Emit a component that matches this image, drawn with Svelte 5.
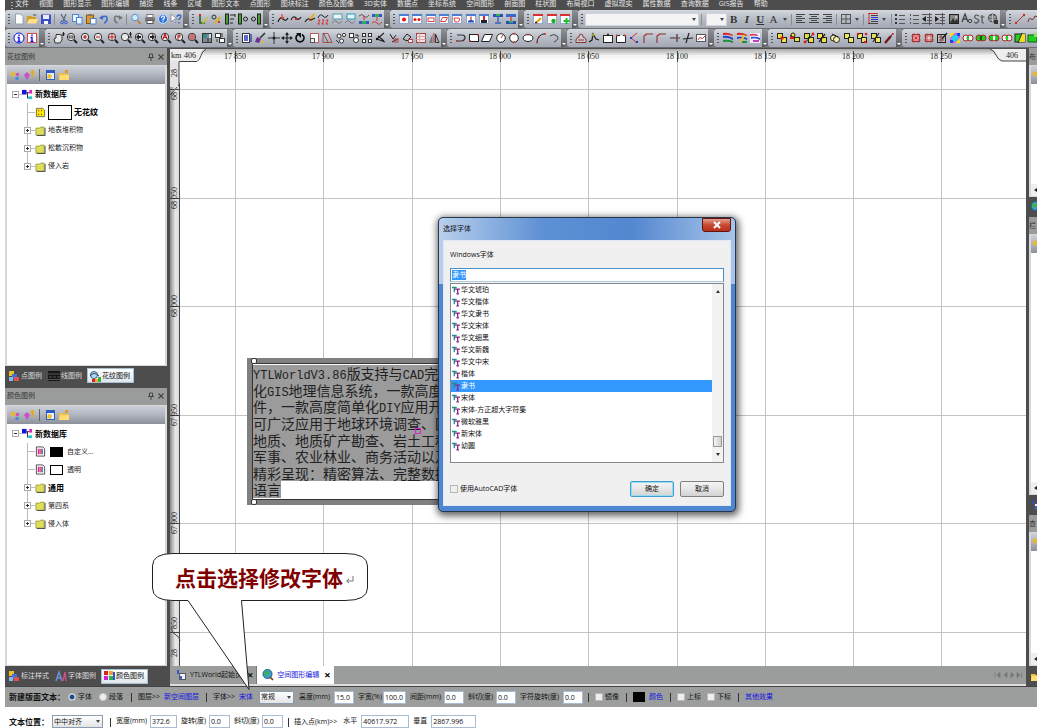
<script lang="ts">
  type Tool = string;
  interface Group {
    width: number;
    tools: Tool[];
  }
  interface Node {
    label: string;
    icon: string;
    swatch?: string;
    bold?: boolean;
  }

  const menus = [
    '文件', '视图', '图形显示', '图形编辑', '捕捉', '线条', '区域', '图形文本', '点图形',
    '图块标注', '颜色及图像', '3D实体', '数据点', '坐标系统', '空间图形', '剖面图', '柱状图',
    '布局视口', '虚拟现实', '属性数据', '查询数据', 'GIS报告', '帮助'
  ];

  // icon builders, all on a 12x12 grid
  const line = (d: string, color = '#222', w = 1) =>
    `<path d="${d}" fill="none" stroke="${color}" stroke-width="${w}"/>`;
  const fill = (d: string, color: string) => `<path d="${d}" fill="${color}"/>`;
  const box = (x: number, y: number, w: number, h: number, color: string, stroke = 'none') =>
    `<rect x="${x}" y="${y}" width="${w}" height="${h}" fill="${color}" stroke="${stroke}"/>`;
  const dot = (x: number, y: number, r: number, color: string, stroke = 'none') =>
    `<circle cx="${x}" cy="${y}" r="${r}" fill="${color}" stroke="${stroke}"/>`;
  const mag = (inner: string) =>
    dot(5, 5, 3.7, '#e8e8ea', '#333') + line('M8 8l3 3', '#222', 2) + inner;
  const win = (inner: string, bar = '#4a7fd0') =>
    box(1.5, 1.5, 9, 9, '#fff', '#8fa8cc') + box(1, 1, 10, 2, bar) + inner;
  const pair = (a: string, b: string) =>
    box(1.5, 1.5, 5, 5, a, '#222') + box(5.5, 5.5, 5, 5, b, '#222');
  const rings = (a: string, mid: string, b: string) =>
    dot(4, 6, 3, a, '#b02020') + dot(8, 6, 3, b, '#b02020') +
    `<ellipse cx="6" cy="6" rx="1.2" ry="2.4" fill="${mid}"/>`;

  const icons: Record<string, string> = {
    new: fill('M2.5 1h5l2.5 2.5V11h-7.5z', '#fff') + line('M2.5 1h5l2.5 2.5V11h-7.5z', '#8aa'),
    open: fill('M1 3h4l1 1h4v6H1z', '#d99a20') + fill('M3 6h9l-2 4.5H1z', '#ffe08a') + line('M7 2q3-1 3 1', '#555'),
    save: box(1, 1.5, 10, 9.5, '#3c4fc0') + box(3, 2, 6, 4, '#e8eefc') + box(4, 8, 4, 3, '#fff'),
    cut: line('M3 1l4 7M8 1L5 8', '#567', 1.2) + dot(4, 9.5, 1.4, 'none', '#35c') + dot(8, 9.5, 1.4, 'none', '#35c'),
    copy: box(1.5, 1.5, 6, 7, '#eaf3ff', '#4b84cc') + box(5.5, 4.5, 5.5, 6.5, '#eaf3ff', '#4b84cc'),
    paste: box(1.5, 2, 7, 8.5, '#d89a30', '#8a5a10') + box(3.5, 1, 3, 2, '#777') + box(5.5, 5.5, 5.5, 5.5, '#fff', '#4b84cc'),
    undo: line('M3 5q6-4 6 1q0 3-3 4', '#3a6fc8', 1.6) + fill('M1 5l4-3v5z', '#3a6fc8'),
    redo: line('M8.5 5q-6-4-6 1q0 3 3 4', '#777', 1.6) + fill('M11 5L7 2v5z', '#777'),
    find: dot(5, 4.5, 3.3, '#cfeaff', '#5a8fc0') + line('M7.5 7.5l3 3.5', '#c08030', 1.8),
    print: box(3, 1.5, 6, 3, '#fff', '#777') + box(1, 4.5, 10, 4, '#777') + box(3, 7.5, 6, 3, '#fff', '#555'),
    help: dot(6, 6, 4.5, '#2f74d8', '#bcd8ff') + line('M4.5 5q0-2 1.5-2t1.5 1.5q0 1-1.5 2v1M6 8.3v1', '#fff', 1.2),
    whats: fill('M1 1v8l2-2 2 3 1-1-2-3h3z', '#fff') + line('M1 1v8l2-2 2 3 1-1-2-3h3z', '#779', 0.7) + line('M7 4q0-2 2-2t2 1.5q0 1-2 2.5v1M9 9v1.5', '#2f64c8', 1.3),
    nodeA: line('M3 1v9h5', '#262', 1.6) + fill('M5 10l5-6 1 1-5 6z', '#d8c020') + box(2, 1, 2, 2, '#e02020'),
    nodeB: dot(4, 4, 2, 'none', '#333') + line('M5 10l5-6', '#d8b020', 2) + box(8, 8, 2, 2, '#cc3030'),
    nodeC: box(1.5, 1, 3, 10, '#4ca030', '#222') + line('M6 2h5M6 6h4M6 10h3M11 1v3', '#222'),
    nodeD: box(1.5, 1, 3, 10, '#4ca030', '#222') + dot(8.5, 6, 2, 'none', '#222'),
    nodeE: box(7.5, 1, 3, 10, '#4ca030', '#222') + dot(3.5, 6, 2, 'none', '#222'),
    curveA: line('M1 9q2-6 5-3t5-1', '#222', 1.2) + line('M5 1v4M3 4l2 2 2-2', '#d22'),
    curveB: line('M1 7q2-5 5-2t5-1', '#222', 1.2) + dot(6, 6, 1.2, '#d22'),
    curveC: line('M1 9q3-5 6-2l4-2', '#222', 1.2) + line('M6 6l4-5', '#e8b010', 2) + dot(6, 7, 1, '#d22'),
    curveD: line('M1 5q2-5 5-2t5-1', '#222') + line('M1 7h2l-2 4h2M5 7h2l-2 4h2M9 7h2l-2 4h2', '#d22', 0.9),
    curveE: box(2, 1, 9, 5, '#e8f4f8', '#5a98a8') + line('M1 10q3-4 5-1t5-1', '#777'),
    curveF: box(3, 1, 8, 5, '#e8f4f8', '#20a0b8') + line('M1 10q3-4 5-1t5-1', '#777'),
    curveG: line('M1 3q3-3 5 0t5-1', '#555') + line('M6 3v4', '#d22') + box(1, 8, 10, 3, '#3858c8') + box(4, 8, 4, 3, '#30b050'),
    curveH: box(1, 1, 10, 3, '#3858c8') + box(4, 1, 4, 3, '#30b050') + line('M6 4v4M1 10q3-3 5 0t5-1', '#c33'),
    winDot: win(dot(6, 6.5, 2, '#e81818')),
    winDots: win(dot(4, 6.5, 1.5, '#e81818') + dot(8, 6.5, 1.5, '#e81818')),
    winRect: win(box(3, 5, 6, 3.5, 'none', '#e84040')),
    winPara: win(line('M4.5 4.5h5l-2 4h-5z', '#e04040')),
    winArc: win(line('M3 5h5q2 2-1 4H4z', '#e04040')),
    winDown: win(line('M6 3.5v5', '#e03030', 1.3) + fill('M3 8q3-2 6 0v1.5H3z', '#2850b8')),
    winTray: win(box(3, 7, 6, 3, '#222') + line('M6 3v4', '#e02020', 2)),
    winPush: box(1, 1, 10, 3, '#2850b8') + line('M6 3v6M3 10h6', '#3a60b8', 1.4) + box(4, 1, 4, 2, '#30b050'),
    winPull: box(1, 1, 10, 3, '#3a68c8') + line('M6 3v6', '#c44', 1.4) + box(1, 8, 10, 3, '#2850b8') + box(4, 8, 4, 2, '#30b050'),
    redEdit: win(line('M4 10l5-5', '#e8a010', 2) + dot(4, 9.5, 1, '#222'), '#d83030'),
    redDot: win(dot(7.5, 8, 2.2, '#20b020'), '#d83030'),
    redAdd: win(line('M7.5 5v6M4.5 8h6', '#20c020', 2), '#d83030'),
    alignL: line('M1 1.5h9M1 3.5h6M1 5.5h9M1 7.5h6M1 9.5h9', '#444'),
    alignC: line('M1 1.5h10M3 3.5h6M1 5.5h10M3 7.5h6M1 9.5h10', '#444'),
    alignR: line('M2 1.5h9M5 3.5h6M2 5.5h9M5 7.5h6M2 9.5h9', '#444'),
    grid: box(1.5, 1.5, 9, 9, 'none', '#555') + line('M6 1v10M1 6h10', '#555'),
    spacing: line('M4 2.5h7M4 8.5h7M1 10.5h10', '#444') + line('M1 .5h10M2 1v9', '#c33') + line('M4 4.5h7M4 6.5h7', '#2238c8'),
    bullets: line('M5 2.5h6M5 6.5h6M5 10.5h6', '#555') + box(1, 1, 2, 2, '#333') + box(1, 5, 2, 2, '#333') + box(1, 9, 2, 2, '#333'),
    numbers: line('M5 2.5h6M5 6.5h6M5 10.5h6M2.5 1v2M2.5 5v2M2.5 9v2', '#555'),
    outdent: line('M1 1.5h10M6 4.5h5M6 7.5h5M1 10.5h10M8.5 0v12', '#555') + fill('M1 6l4-3v6z', '#222'),
    indent: line('M1 1.5h10M6 4.5h5M6 7.5h5M1 10.5h10M8.5 0v12', '#555') + fill('M5 6L1 3v6z', '#222'),
    photo: box(1.5, 1.5, 9, 9, '#888', '#222') + fill('M2 10l3-5 2 3 2-2 2 4z', '#333') + dot(8, 4, 1, '#ddd'),
    aSub: line('M1 9l3-8 3 8M2 6h4', '#444', 1.3) + dot(9, 8, 1.7, 'none', '#444'),
    stText: line('M5 3q-3-2-4 0t2 3q3 1 1 3t-4 0M8 2v7q0 1 2 1M6.5 4h4', '#555', 1.2),
    globe: dot(5.5, 5, 4, '#777', '#444') + line('M2 4h7M2 7h7M5.5 1v8', '#bbb') + box(7, 7, 4, 4, '#333'),
    segment: line('M2 10l8-8', '#a33') + dot(2, 10, 1.2, '#d22') + dot(10, 2, 1.2, '#d22'),
    polyline: line('M1 9q1-5 3-3t4-3l3 1', '#733'),
    infoO: dot(6, 6, 5, '#fff', '#1414e0') + line('M6 2.5v1.5M4.5 5.5H6v4M4.5 9.5h3', '#1414e0', 1.4),
    infoB: box(1.5, 1.5, 9, 9, '#fff', '#e04848') + line('M6 2.5v1.5M4.5 5.5H6v4M4.5 9.5h3', '#1414e0', 1.4),
    pan: fill('M2 11L1 7l2-1V3l1-1 1 1 1-1 1 1 2 0v5l-2 3z', '#e8e8e8') + line('M2 11L1 7l2-1V3l1-1 1 1 1-1 1 1 2 0v5l-2 3z', '#333') + line('M9 2h3M10.5 0v4', '#222'),
    zoomRect: mag(line('M3 4h4v2H3z', '#444')),
    zoomIn: mag(line('M5 3v4M3 5h4', '#c01818', 1.2)),
    zoomOut: mag(line('M3 5h4', '#c01818', 1.2)),
    zoomAll: mag(line('M5 1v8M1 5h8', '#c01818')),
    zoomPm: mag(line('M9 2h3M9 5h3M10.5 0v4', '#222')),
    zoomL: mag(fill('M2 5l3-3v2h2v2H5v2z', '#222')),
    zoomR: mag(fill('M8 5L5 2v2H3v2h2v2z', '#222')),
    zoomA: mag(line('M3 7l2-5 2 5M4 5.5h2', '#c01818', 1.2)),
    zoomP: mag(line('M4 8V3h2v2H4', '#c01818')),
    zoomX: mag(line('M3 3h4v4H3zM5 1v8M1 5h8', '#b03030', 0.8)),
    views: box(1.5, 1.5, 9, 9, '#cde', '#333') + box(2, 2, 4, 4, '#3a8a8a') + line('M2 7h8M7 2v8M2 9h8', '#333'),
    cascade: box(1.5, 1.5, 5, 4, '#fff', '#333') + box(5.5, 6.5, 5, 4, '#fff', '#333') + line('M8 1v4M3 7v3', '#333'),
    select: box(1.5, 1.5, 7, 9, '#fff', '#334') + line('M3 4h4M3 6h4M3 8h4M10 2v8', '#2838b8', 1.3),
    brush: line('M11 1L6 6', '#333', 1.6) + fill('M3 5l4 2-2 4-4-1z', '#703090') + dot(9, 10, 1.3, '#d8c020'),
    cross: line('M6 0v12M0 6h12', '#333') + dot(6, 6, 1.5, '#222'),
    move: line('M6 1v10M1 6h10', '#222', 1.2) + fill('M6 0l2 3H4zM6 12l2-3H4zM0 6l3-2v4zM12 6L9 4v4z', '#222'),
    rotate: line('M4 2.5a4 4 0 1 0 4 0', '#111', 1.7) + fill('M2 1h5v5z', '#111'),
    scale: box(2.5, 1.5, 8, 9, '#fff', '#c06060') + box(2.5, 6.5, 4, 4, '#eee', '#555'),
    shear: line('M2 1.5h5l4 9H2z', '#b04848') + line('M2 1l5 9', '#555'),
    link: dot(4, 4, 2, '#fff', '#333') + dot(9, 3, 1.6, '#fff', '#333') + dot(6.5, 9, 2, '#fff', '#333') + line('M1 8l3 3', '#333'),
    copyObj: box(1.5, 1.5, 4, 4, '#fff', '#333') + dot(8, 8, 2.5, '#fff', '#333') + line('M7 3h3v2', '#333'),
    array: box(1.5, 1.5, 3, 3, '#fff', '#333') + box(7.5, 1.5, 3, 3, '#fff', '#333') + box(1.5, 7.5, 3, 3, '#fff', '#333') + box(7.5, 7.5, 3, 3, '#fff', '#333'),
    angle: line('M9 1L2 7l8 3M3 4l6 5', '#222', 1.1) + dot(2, 7, 1.2, '#111'),
    mirrorA: line('M2 2l3 5 3-4M4 10l6-3', '#222') + box(6, 7, 4, 3, 'none', '#c04040'),
    mirrorB: line('M1 7l4-5 4 3-4 4z', '#222') + box(6.5, 7.5, 4, 3, '#fff', '#c04040'),
    table: box(1.5, 1.5, 9, 9, '#f2e4e4', '#a04040') + line('M1 4.5h10M1 7.5h10M4.5 1v10', '#c99', 0.8),
    flip: line('M6 1v10', '#b33') + fill('M4.5 2v9H1z', '#777') + line('M7.5 2v8.5H11z', '#333'),
    hook: line('M2 3h5q3 0 3 2.5T7 9H1', '#333', 1.2) + dot(2, 9, 1, '#c33'),
    rect: box(1.5, 2.5, 9, 7, '#fff', '#222') + dot(2, 9, 1, '#c33') + dot(10, 3, 1, '#c33'),
    para: fill('M3.5 2.5h8l-3 7h-8z', '#fff') + line('M3.5 2.5h8l-3 7h-8z', '#222'),
    circle: dot(6, 6, 4.3, '#fff', '#222') + line('M6 6l2-3', '#c33'),
    circle3: dot(6, 6, 4.3, '#fff', '#222') + dot(6, 1.7, 1, '#c33') + dot(6, 10.3, 1, '#c33'),
    ellipse: '<ellipse cx="6" cy="6" rx="5" ry="3.5" fill="#fff" stroke="#222"/>' + dot(6, 2.5, 1, '#c33'),
    arc: line('M2 11Q2 3 10 1.5', '#222') + dot(2, 10.5, 1, '#c33') + dot(10, 2, 1, '#c33') + dot(4, 5, 1, '#c33'),
    arc2: line('M2 4q4-3 7 0t-3 6', '#444'),
    stamp: fill('M1 8q0-3 3-3 0-3 2-3t2 3q3 0 3 3v2H1z', '#ccc') + line('M1 10.5V8q0-2 3-3 0-3 2-3t2 3q3 1 3 3v2.5zM3 8h6', '#833'),
    spline: line('M1 10l3-2 1-6 3 5 3 1', '#222', 1.3) + dot(5, 3, 1.4, '#9a9a20'),
    rectIn: box(1.5, 3.5, 9, 7, '#fff', '#222') + dot(6, 2.5, 1, '#222'),
    rectGap: box(1.5, 3.5, 9, 7, '#fff') + line('M5 3.5H1.5v7h9v-7H8', '#222') + dot(2, 3.5, 1, '#c33') + dot(10, 3.5, 1, '#c33'),
    polyBlue: line('M9 1L3 6l6 5', '#c33') + box(2, 5, 2, 2, '#2238c8') + box(8, 9, 2, 2, '#2238c8'),
    fillet: line('M2 11V4l3-2h6', '#833', 1.1) + line('M2 4q1-2 3-2', '#c33'),
    trim: line('M1 6h5M8 2v8', '#333', 1.2) + line('M6 6h5', '#833'),
    extend: line('M1 7l10-1M7 1L4 11', '#222', 1.2),
    hatch: box(1.5, 2.5, 9, 7, '#fff', '#555') + line('M3 8q2-4 3-2t4-2', '#c33'),
    flagA: fill('M1 1q5-1 10 2v1Q6 2 1 3z', '#e02020') + fill('M1 4q5-1 10 2v2Q6 5 1 6z', '#2040d0') + fill('M1 8q5-1 10 1v2q-5-2-10-1z', '#209040'),
    flagB: fill('M1 1q5-1 10 2v1Q6 2 1 3z', '#e02020') + fill('M1 5q5-1 10 1v2Q6 5 1 7z', '#2040d0') + line('M5 10l3-7', '#e8c020', 2) + fill('M6 9h5v2H6z', '#209040'),
    flagC: box(1, 1, 10, 10, '#eef') + fill('M1 2q5-1 8 1v1q-4-1-8 0z', '#e04060') + fill('M2 5q5-1 9 1v2Q6 5 2 7z', '#3050d0') + fill('M4 8h6v2H4z', '#c040c0'),
    unionA: pair('#f0e040', '#f0e040') + box(4.5, 4.5, 3, 3, '#e02020'),
    unionB: box(1, 3, 5, 4, '#e02020') + box(5.5, 5.5, 5, 4, '#f0e040', '#222') + dot(4, 3, 2, '#f0e040', '#222'),
    unionC: pair('#d8e040', '#f0e040') + line('M2 11l8-9', '#222') + dot(10, 2, 1.4, '#e02020') + dot(2, 10, 1.4, '#e02020'),
    unionD: pair('#f0e040', '#f0e040') + line('M3 10l6-8', '#222', 1.3),
    unionE: dot(4.5, 6, 3, '#f8f4b0', '#222') + dot(7.5, 7.5, 3, '#f8f4b0', '#222') + line('M3 2l6 3', '#222'),
    unionF: pair('#f0e860', '#f0e860'),
    unionG: pair('#f0e860', '#f0e860') + dot(2, 2, 1.3, '#e02020') + dot(10, 2, 1.3, '#e02020') + dot(9, 10, 1.3, '#e02020'),
    unionH: pair('#e0e060', '#f0e860') + line('M9 1L3 10', '#222', 1.2),
    wand: line('M2 11l6-7', '#701818', 2.4) + line('M8 4l2-3', '#333') + dot(10, 2, 1, '#e03030'),
    meshA: box(2.5, 2.5, 7, 7, '#f8d8d8', '#a03030') + line('M1 4h10M1 8h10M4 1v10M8 1v10', '#b44', 0.8) + box(5, 5, 2, 2, '#e02020'),
    meshB: box(2.5, 2.5, 7, 7, '#e8d0d0', '#a03030') + line('M1 4h10M1 8h10M4 1v10M8 1v10', '#b44', 0.8),
    meshC: box(1.5, 2.5, 8, 8, '#bbb', '#222') + line('M3 5h5M3 8h5M5 3v7', '#844') + line('M6 7l5-6', '#222', 1.3),
    color: box(1, 1, 10, 10, '#f040f0') + fill('M1 1h5L1 6zM11 11H6l5-5z', '#f0e020') + fill('M3 4l5-2 2 4-3 4-5-2z', '#20d0f0') + box(8, 1, 3, 3, '#2040f0') + box(1, 8, 3, 3, '#2040f0'),
    ringA: rings('#fff', '#20d020', '#fff'),
    ringB: rings('#20d020', '#106010', '#20d020'),
    ringC: rings('#20d020', '#fff', '#20d020'),
    ringD: rings('#fff', '#20d020', '#eee'),
    slice: box(1, 2, 10, 8, '#20d020', '#222') + fill('M7 2h4v8H4z', '#f0e020') + line('M8 1L4 11', '#222'),
    green: box(1, 3, 9, 7, '#20d020', '#106010') + fill('M7 1h4v4H7z', '#90e070')
  };

  const toolbars: Group[][] = [
    [
      { width: 184, tools: ['new', 'open', 'save', '|', 'cut', 'copy', 'paste', 'undo', 'redo', '|', 'find', 'print', 'help', 'whats'] },
      { width: 80, tools: ['nodeA', 'nodeB', 'nodeC', 'nodeD', 'nodeE'] },
      { width: 121, tools: ['curveA', 'curveB', 'curveC', 'curveD', 'curveE', 'curveF', 'curveG', 'curveH'] },
      { width: 134, tools: ['winDot', 'winDots', 'winRect', 'winPara', 'winArc', 'winDown', 'winTray', 'winPush', 'winPull'] },
      { width: 54, tools: ['redEdit', 'redDot', 'redAdd'] },
      {
        width: 428,
        tools: [
          'combo-font', '|', 'combo-size', 'B', 'I', 'U', 'A', 'v', '|', 'alignL', 'alignC', 'alignR', '|', 'grid', 'v', '|',
          'spacing', 'v', '|', 'bullets', 'numbers', 'outdent', 'indent', 'photo', 'aSub', 'stText', 'globe'
        ]
      },
      { width: 0, tools: ['segment', 'polyline'] }
    ],
    [
      { width: 40, tools: ['infoO', 'infoB'] },
      {
        width: 188,
        tools: ['pan', 'zoomRect', 'zoomIn', 'zoomOut', 'zoomAll', 'zoomPm', 'zoomL', 'zoomR', 'zoomA', 'zoomP', 'zoomX', 'views', 'cascade']
      },
      {
        width: 214,
        tools: ['select', 'brush', 'cross', 'move', 'rotate', 'scale', 'shear', 'link', 'copyObj', 'array', 'angle', 'mirrorA', 'mirrorB', 'table', 'flip']
      },
      { width: 120, tools: ['hook', 'rect', 'para', 'circle', 'circle3', 'ellipse', 'arc', 'arc2'] },
      { width: 147, tools: ['stamp', 'spline', 'rectIn', 'rectGap', 'polyBlue', 'fillet', 'fillet', 'trim', 'extend', 'hatch'] },
      { width: 54, tools: ['flagA', 'flagB', 'flagC'] },
      { width: 134, tools: ['unionA', 'unionB', 'unionC', 'unionD', 'unionE', 'unionF', 'unionG', 'unionH', 'wand'] },
      { width: 0, tools: ['meshA', 'meshB', 'meshC', 'color', 'ringA', 'ringB', 'ringC', 'ringD', 'slice', 'green'] }
    ]
  ];

  const small: Record<string, string> = {
    gems: fill('M1 5l3-3 3 3-3 3z', '#e8b830') + dot(8.5, 5.5, 1.8, '#d050c0') + dot(8, 9.5, 1.8, '#4090d8'),
    gemUp: fill('M1 6l3-3 3 3-3 5z', '#c850d0') + line('M9.5 1v7', '#e8a818', 1.8) + fill('M7 4l2.5-3L12 4z', '#e8a818'),
    props: box(2.5, 1.5, 8, 9, '#e8f0ff', '#3060b8') + box(2, 1, 9, 3, '#2c5cc0') + fill('M4 5l4 1-1 4-4-1z', '#e8c030'),
    folderNew: fill('M1 4h4l1 1h5v6H1z', '#f0c040') + fill('M2 6h9v5H1z', '#ffdc70') + box(7, 1, 3, 3, '#e89820'),
    root: box(0, 1, 5, 5, '#1414e0') + box(8, 1, 3, 4, '#e020c0') + box(7, 8, 4, 3, '#20c8c8') + line('M5 4h3M6 4v6h1', '#222'),
    folder: fill('M1 3h4l1-1h4v9H1z', '#dede58') + line('M1 3.5h4l1-1h4v8.5H1z', '#a0a058') + line('M11 3v8.5H2', '#444'),
    pattern: fill('M1.5 1.5h7l2 2v7h-9z', '#f8f000') + line('M1.5 1.5h7l2 2v7h-9z', '#665') + line('M3.5 4h1M6.5 4h1M3.5 8h1M6.5 8h1', '#a31818', 1.2),
    palette: fill('M1.5 1h7l2 2v8h-9z', '#fff') + line('M1.5 1h7l2 2v8h-9z', '#444') + box(3, 3, 2, 6, '#e020c0') + box(5, 3, 2, 6, '#f07020') + box(7, 3, 1.5, 6, '#3050e0'),
    pointTab: box(1, 1, 5, 5, '#e8c030') + box(4, 4, 5, 5, '#4070d8') + box(6, 7, 5, 4, '#e05050') + box(1, 7, 4, 4, '#80b8f0'),
    lineTab: box(0, 1, 12, 10, '#161616') + line('M0 4h12M1 7h3M5 7h3M9 7h3M0 9.5h12', '#555'),
    fillTab: dot(5, 5, 3.5, '#b8d8f0', '#406090') + line('M1 6q4-5 9 0', '#246') + box(3, 9, 3, 3, '#e02020') + box(6, 9, 3, 3, '#f0b020') + box(9, 7, 3, 5, '#30b040'),
    fontTab: line('M1 11l3-9 3 9M2 8h4', '#7090e0', 1.4) + line('M8 11l2-9 1 9', '#d05080', 1.4),
    colorTab: box(1, 1, 4, 4, '#e02020') + box(6, 1, 4, 4, '#f0a020') + box(1, 6, 4, 4, '#d020d0') + box(6, 6, 4, 4, '#30b040') + box(10, 2, 2, 8, '#3050e0'),
    docTab: box(4.5, 4.5, 6, 6, '#f0f4ff', '#556') + line('M3 1v4M6 7v3', '#3050c0', 1.8),
    earth: dot(5.5, 5, 4.5, '#38a0c8', '#206080') + fill('M3 2l3 0 1 3-3 2-2-2z', '#40b050') + line('M8 8l3 3', '#803010', 1.6),
    tt: line('M0 1.5h7M3.5 1.5v7', '#20908c', 2) + line('M4.5 4h7.5M8.5 4v7M6.5 11h4', '#8c2890', 2)
  };

  const patternTree: Node[] = [
    { label: '无花纹', icon: 'pattern', swatch: 'large', bold: true },
    { label: '地表堆积物', icon: 'folder' },
    { label: '松散沉积物', icon: 'folder' },
    { label: '侵入岩', icon: 'folder' }
  ];
  const colorTree: Node[] = [
    { label: '自定义...', icon: 'palette', swatch: 'black' },
    { label: '透明', icon: 'palette', swatch: 'white' },
    { label: '通用', icon: 'folder', bold: true },
    { label: '第四系', icon: 'folder' },
    { label: '侵入体', icon: 'folder' }
  ];
  const docks = [
    { title: '花纹图例', grow: 337, tree: patternTree, tabs: [['pointTab', '点图例'], ['lineTab', '线图例'], ['fillTab', '花纹图例']] },
    { title: '颜色图例', grow: 298, tree: colorTree, tabs: [['pointTab', '标注样式'], ['fontTab', '字体图例'], ['colorTab', '颜色图例']] }
  ];
  const sideDocks = [
    { title: '布', grow: 169, icon: 'earth' },
    { title: '栏', grow: 298, icon: 'docTab' },
    { title: '查', grow: 171, icon: 'folderNew' }
  ];

  // ruler ticks, in canvas pixels
  const columns = ['17 850', '17 900', '17 950', '18 000', '18 050', '18 100', '18 150', '18 200', '18 250']
    .map((label, i) => ({ label, x: Math.round(65 + i * 88.3) }));
  const rows = ['', '68 050', '68 000', '67 950', '67 900', '']
    .map((label, i) => ({ label, y: Math.round(40 + i * 108.6) }));

  const textLines = [
    ['YTLWorldV3.86', '版支持与', 'CAD', '完美'],
    ['化', 'GIS', '地理信息系统，一款高度'],
    ['件，一款高度简单化', 'DIY', '应用开发'],
    ['可广泛应用于地球环境调查、国'],
    ['地质、地质矿产勘查、岩土工程'],
    ['军事、农业林业、商务活动以及'],
    ['精彩呈现：精密算法、完整数据'],
    ['语言']
  ];

  const fonts = [
    '华文琥珀', '华文楷体', '华文隶书', '华文宋体', '华文细黑', '华文新魏', '华文中宋',
    '楷体', '隶书', '宋体', '宋体-方正超大字符集', '微软雅黑', '新宋体', '幼圆'
  ];
  let selectedFont = $state('隶书');
  let textMode = $state('font');

  const textFields = [
    { label: '高度(mm)', value: '15.0', width: 35, input: 20 },
    { label: '字宽(%)', value: '100.0', width: 25, input: 23 },
    { label: '间距(mm)', value: '0.0', width: 34, input: 20 },
    { label: '斜切(度)', value: '0.0', width: 28, input: 20 },
    { label: '字符旋转(度)', value: '0.0', width: 43, input: 20 }
  ];
  const boxFields = [
    { label: '宽度(mm)', value: '372.6', width: 34, input: 27 },
    { label: '旋转(度)', value: '0.0', width: 28, input: 21 },
    { label: '斜切(度)', value: '0.0', width: 28, input: 21 }
  ];
</script>

{#snippet icon(body: string)}
  <svg class="icon" viewBox="0 0 12 12" aria-hidden="true">{@html body}</svg>
{/snippet}

{#snippet field(id: string, label: string, value: string, width: number, input: number)}
  <span class="field">
    <label for={id} style:width="{width}px">{label}</label>
    <input {id} type="text" {value} style:width="{input}px" />
  </span>
{/snippet}

<div class="app">
  <nav class="menubar">
    <span class="grip"></span>
    <div class="menus">
      {#each menus as menu}
        <button>{menu}</button>
      {/each}
    </div>
  </nav>

  {#each toolbars as bar}
    <div class="toolbar">
      {#each bar as group}
        <div class="group" class:last={!group.width} style:width={group.width ? `${group.width}px` : null}>
          <span class="grip"></span>
          {#each group.tools as tool}
            {#if tool === '|'}
              <span class="sep"></span>
            {:else if tool === 'v'}
              <button class="drop" aria-label="more"><i class="caret"></i></button>
            {:else if tool.startsWith('combo')}
              <span class="combo {tool}">
                <select aria-label={tool}><option></option></select>
                <i class="caret"></i>
              </span>
            {:else if tool.length === 1}
              <button class="tool letter {tool}">{tool}</button>
            {:else}
              <button class="tool" aria-label={tool}>{@render icon(icons[tool])}</button>
            {/if}
          {/each}
          <span class="cap"></span>
        </div>
      {/each}
    </div>
  {/each}

  <div class="workspace">
    <aside class="dock">
      {#each docks as dock}
        <section class="panel" style:flex-grow={dock.grow}>
          <header>
            <h2>{dock.title}</h2>
            <button aria-label="Pin">
              <svg viewBox="0 0 8 8"><path d="M2.5 1h3v3.5h-3zM1 4.5h6M4 5v3" fill="none" stroke="#444" /></svg>
            </button>
            <button aria-label="Close">
              <svg viewBox="0 0 8 8"><path d="M1.5 1.5l5 5M6.5 1.5l-5 5" stroke="#444" stroke-width="1.2" /></svg>
            </button>
          </header>
          <div class="frame">
            <div class="panel-tools">
              <button aria-label="Add">{@render icon(small.gems)}</button>
              <button aria-label="Up">{@render icon(small.gemUp)}</button>
              <span class="sep"></span>
              <button aria-label="Properties">{@render icon(small.props)}</button>
              <button aria-label="Folder">{@render icon(small.folderNew)}</button>
            </div>
            <div class="tree">
              <div class="node root">
                <i class="expander"></i><i class="stub"></i>
                {@render icon(small.root)}
                <b>新数据库</b>
              </div>
              <ul>
                {#each dock.tree as node}
                  <li class="node">
                    {#if node.icon === 'folder'}
                      <i class="expander plus"></i><i class="stub"></i>
                    {:else}
                      <i class="stub long"></i>
                    {/if}
                    {@render icon(small[node.icon])}
                    {#if node.swatch}<i class="swatch {node.swatch}"></i>{/if}
                    <span class:bold={node.bold}>{node.label}</span>
                  </li>
                {/each}
              </ul>
            </div>
          </div>
          <div class="dock-tabs">
            {#each dock.tabs as [tabIcon, label], i}
              <button class:active={i === 2}>{@render icon(small[tabIcon])}{label}</button>
            {/each}
          </div>
        </section>
      {/each}
    </aside>

    <main>
      <div class="canvas">
        <svg class="sheet">
          <defs>
            <linearGradient id="rulerX" x2="0" y2="1">
              <stop offset="0" stop-color="#a8a8a8" />
              <stop offset="0.5" stop-color="#f2f2f2" />
              <stop offset="1" stop-color="#fff" />
            </linearGradient>
            <linearGradient id="rulerY">
              <stop offset="0" stop-color="#8c8c8c" />
              <stop offset="0.6" stop-color="#e8e8e8" />
              <stop offset="1" stop-color="#ddd" />
            </linearGradient>
          </defs>
          <rect width="100%" height="13" fill="url(#rulerX)" />
          <rect y="13" width="9" height="100%" fill="url(#rulerY)" />
          {#each columns as col}
            <line x1={col.x} x2={col.x} y1="13" y2="100%" class="grid" />
            <line x1={col.x} x2={col.x} y1="2" y2="13" class="tick" />
            <text x={col.x} y="10" text-anchor="middle">{col.label}</text>
          {/each}
          {#each rows as row}
            <line x1="9" x2="100%" y1={row.y} y2={row.y} class="grid" />
            <line x1="0" x2="9" y1={row.y} y2={row.y} class="tick" />
            <text transform="translate(7 {row.y}) rotate(-90)" text-anchor="middle">{row.label}</text>
          {/each}
          <line x1="9" x2="9" y1="20" y2="100%" class="tick" />
          <path d="M0 46l9-10V12.5h18q3-2 4-6t5-6" fill="#fff" stroke="#444" />
          <path d="M0 0h34q-3 2-4 6t-4 6H0z" fill="#ececec" />
          <rect y="12" width="8" height="26" fill="#e4e4e4" />
          <text x="1" y="9">km</text>
          <text x="14" y="9">406</text>
          <text transform="translate(7 28) rotate(-90)">28</text>
          <text transform="translate(7 51) rotate(-90)">68</text>
          <svg x="100%" class="anchor">
            <path d="M-36 0q4 1 6 6t6 6H0V0z" fill="#eee" />
            <path d="M-36 0q4 1 6 6t6 6H0" fill="none" stroke="#444" />
            <text x="-20" y="9">406</text>
          </svg>
          <svg y="100%" class="anchor">
            <text transform="translate(7 -37) rotate(-90)">850</text>
            <text transform="translate(7 -9) rotate(-90)">28</text>
            <path d="M1 -38q1 5 5 7t4 6" fill="none" stroke="#444" />
          </svg>
        </svg>

        <div class="text-object">
          <div class="lines">
            {#each textLines as parts}
              <p>{#each parts as part}<span class:latin={part.charCodeAt(0) < 128}>{part}</span>{/each}</p>
            {/each}
          </div>
          <i class="handle top"></i>
          <i class="handle bottom"></i>
        </div>
        <i class="anchor-mark"></i>
      </div>
      <div class="doc-tabs">
        <button>{@render icon(small.docTab)}YTLWorld起始页<b>×</b></button>
        <button class="active">{@render icon(small.earth)}空间图形编辑<b>×</b></button>
        <span class="pager">
          <svg viewBox="0 0 28 8" aria-hidden="true">
            <path d="M1 1.5v5M6 1.5L3 4l3 2.5zM13 1.5L10 4l3 2.5zM17 1.5L20 4l-3 2.5zM23 1.5L26 4l-3 2.5zM27.5 1.5v5" fill="#777" stroke="#777" stroke-width="0.8" />
          </svg>
        </span>
      </div>
    </main>

    <aside class="side">
      {#each sideDocks as dock}
        <section class="panel" style:flex-grow={dock.grow}>
          <header><h2>{dock.title}</h2></header>
          <div class="frame">
            <div class="panel-tools">{@render icon(small.gems)}</div>
            <div class="blank"></div>
            <div class="scroll"><i></i></div>
          </div>
          <div class="dock-tabs"><button aria-label={dock.title}>{@render icon(small[dock.icon])}</button></div>
        </section>
      {/each}
    </aside>
  </div>

  <form class="status">
    <b class="title">新建版面文本：</b>
    <label class="radio"><input type="radio" name="mode" value="font" bind:group={textMode} />字体</label>
    <label class="radio"><input type="radio" name="mode" value="paragraph" bind:group={textMode} />段落</label>
    <span class="bar"></span>
    <span class="pair">图层&gt;&gt;<a href="#layer">新空间图层</a></span>
    <span class="bar"></span>
    <span class="pair">字体&gt;&gt;<a href="#font">宋体</a></span>
    <span class="combo style">
      <select aria-label="字形"><option>常规</option></select>
      <i class="caret"></i>
    </span>
    {#each textFields as f, i}
      {@render field(`text-${i}`, f.label, f.value, f.width, f.input)}
    {/each}
    <span class="bar"></span>
    <label class="check"><input type="checkbox" />镜像</label>
    <span class="bar"></span>
    <span class="pair"><i class="color"></i><a href="#color">颜色</a></span>
    <span class="bar"></span>
    <label class="check"><input type="checkbox" />上标</label>
    <label class="check"><input type="checkbox" />下标</label>
    <span class="bar"></span>
    <a href="#effects">其他效果</a>
  </form>

  <form class="status position">
    <b class="title">文本位置：</b>
    <span class="combo align">
      <select aria-label="文本位置"><option>中中对齐</option></select>
      <i class="caret"></i>
    </span>
    <span class="bar"></span>
    {#each boxFields as f, i}
      {@render field(`box-${i}`, f.label, f.value, f.width, f.input)}
    {/each}
    <span class="bar"></span>
    <span class="pair">插入点(km)&gt;&gt;</span>
    {@render field('pos-x', '水平', '40617.972', 18, 48)}
    {@render field('pos-y', '垂直', '2867.996', 18, 45)}
  </form>

  <div class="dialog" role="dialog" aria-label="选择字体">
    <header>
      <h2>选择字体</h2>
      <button aria-label="关闭">
        <svg viewBox="0 0 10 8"><path d="M2 1l6 6M8 1L2 7" stroke="#fff" stroke-width="2" /></svg>
      </button>
    </header>
    <div class="client">
      <label for="font-name">Windows字体</label>
      <div class="name-box">
        <span class="highlight">{selectedFont}</span>
        <input id="font-name" type="text" />
      </div>
      <div class="list">
        <ul role="listbox" aria-label="Windows字体">
          {#each fonts as font}
            <li role="option" aria-selected={font === selectedFont}>
              <button type="button" onclick={() => (selectedFont = font)}>{@render icon(small.tt)}{font}</button>
            </li>
          {/each}
        </ul>
        <div class="scrollbar">
          <i class="arrow up"></i>
          <i class="thumb"></i>
          <i class="arrow"></i>
        </div>
      </div>
      <div class="actions">
        <label class="check"><input type="checkbox" />使用AutoCAD字体</label>
        <button class="primary">确定</button>
        <button>取消</button>
      </div>
    </div>
  </div>

  <div class="callout">
    <svg viewBox="0 0 218 140" aria-hidden="true">
      <path
        d="M22 1.5H194Q216.5 1.5 216.5 14V36Q216.5 48.5 194 48.5H90.5L98 137.5L37 48.5H22Q1.5 48.5 1.5 36V14Q1.5 1.5 22 1.5Z"
        fill="#fff"
        stroke="#222"
      />
      <path d="M202 24v5h-6M198 27l-2.5 2 2.5 2" fill="none" stroke="#777" />
    </svg>
    <p>点击选择修改字体</p>
  </div>
</div>

<style>
  :global(body) {
    margin: 0;
    overflow: hidden;
  }

  .app {
    position: relative;
    display: flex;
    flex-direction: column;
    height: 100vh;
    box-sizing: border-box;
    padding-left: 5px;
    overflow: hidden;
    background: #fff;
    color: #111;
    font: 7px/10px 'Open Sans', 'Noto Sans CJK SC', sans-serif;
  }

  button,
  input,
  select {
    font: inherit;
    color: inherit;
    margin: 0;
    padding: 0;
    border: 0;
    border-radius: 0;
    background: none;
    box-sizing: border-box;
  }

  h2,
  p,
  ul {
    margin: 0;
    padding: 0;
    font: inherit;
    list-style: none;
  }

  .icon {
    display: block;
    width: 12px;
    height: 12px;
    flex-shrink: 0;
  }

  .caret {
    border: 2px solid transparent;
    border-top: 3px solid #444;
    border-bottom: 0;
  }

  .menubar {
    display: flex;
    align-items: flex-end;
    height: 10px;
    flex-shrink: 0;
    padding-left: 3px;
    background: #4d4d4d;
    color: #e8e8e8;
  }

  .menus {
    display: flex;
    justify-content: space-between;
    flex: 0 1 753px;
    padding: 0 0 2px;
  }

  .menus button {
    line-height: 8px;
    white-space: nowrap;
  }

  .toolbar {
    display: flex;
    height: 18px;
    flex-shrink: 0;
    padding-bottom: 1px;
    background: #6b6d70;
  }

  .group {
    display: flex;
    align-items: center;
    flex-shrink: 0;
    background: linear-gradient(#d4d8de, #b6bbc5 50%, #a3a8b4);
    border-radius: 3px;
    box-sizing: border-box;
    overflow: hidden;
  }

  .group.last {
    flex: 1 1 0;
    border-radius: 3px 0 0 3px;
  }

  .group.last .tool {
    flex: 0 0 13px;
  }

  .group.last .cap {
    display: none;
  }

  .grip {
    width: 2px;
    height: 11px;
    margin: 0 2px 0 3px;
    flex-shrink: 0;
    background: repeating-linear-gradient(#555 0 1px, transparent 1px 3px);
  }

  .menubar .grip {
    height: 8px;
    background: repeating-linear-gradient(#aaa 0 1px, transparent 1px 3px);
  }

  .cap {
    width: 6px;
    align-self: stretch;
    background: linear-gradient(#8d9095, #5c5e62);
    border-radius: 0 3px 3px 0;
    display: flex;
    align-items: flex-end;
    justify-content: center;
  }

  .cap::after {
    content: '';
    border: 2px solid transparent;
    border-top-color: #fff;
  }

  .tool {
    flex: 1 1 0;
    min-width: 0;
    display: flex;
    align-items: center;
    justify-content: center;
  }

  .letter {
    font: bold 11px/12px 'Liberation Serif', serif;
    color: #333;
  }

  .letter.I {
    font-style: italic;
  }

  .letter.U {
    text-decoration: underline;
  }

  .letter.A {
    font-weight: normal;
  }

  .drop {
    width: 9px;
    display: flex;
    justify-content: center;
  }

  .sep {
    width: 1px;
    height: 11px;
    margin: 0 2px;
    flex-shrink: 0;
    background: #888c94;
  }

  .combo {
    display: flex;
    align-items: center;
    flex-shrink: 0;
    height: 13px;
    background: #f4f4f4;
    border: 1px solid #d0d4da;
    box-sizing: border-box;
  }

  .combo select {
    appearance: none;
    flex: 1;
    min-width: 0;
    height: 100%;
  }

  .combo .caret {
    margin-right: 2px;
  }

  .combo-font {
    width: 114px;
  }

  .combo-size {
    width: 21px;
    margin-left: 2px;
  }

  .workspace {
    display: flex;
    flex: 1;
    min-height: 0;
    background: #4d4d4d;
  }

  .dock {
    display: flex;
    flex-direction: column;
    gap: 2px;
    width: 162px;
    flex-shrink: 0;
  }

  .panel {
    display: flex;
    flex-direction: column;
    flex: 1 1 0;
    min-height: 0;
  }

  .panel header {
    display: flex;
    align-items: center;
    gap: 2px;
    height: 17px;
    padding: 0 2px;
    flex-shrink: 0;
    background: #9a9c9b;
    color: #333;
  }

  .panel header h2 {
    flex: 1;
  }

  .panel header button {
    width: 8px;
    height: 8px;
    display: flex;
  }

  .frame {
    display: flex;
    flex-direction: column;
    flex: 1;
    min-height: 0;
    border: 1px solid #d8d8d8;
    border-left-width: 2px;
    border-right-width: 2px;
    background: #fff;
  }

  .panel-tools {
    display: flex;
    align-items: center;
    gap: 2px;
    height: 18px;
    padding-left: 2px;
    flex-shrink: 0;
    background: linear-gradient(#ccd0d8, #b0b4be 50%, #8c9099);
  }

  .panel-tools .sep {
    height: 12px;
    background: #666;
  }

  .tree {
    flex: 1;
    padding: 1px 0 0 5px;
    color: #222;
  }

  .node {
    display: flex;
    align-items: center;
    height: 18px;
  }

  .tree b,
  .bold {
    font-size: 8px;
    font-weight: bold;
    color: #000;
  }

  .tree ul {
    margin-left: 15px;
    background: linear-gradient(#bbb, #bbb) 0 0 / 1px calc(100% - 9px) no-repeat;
  }

  .node .icon {
    width: 11px;
    height: 11px;
    margin-right: 2px;
  }

  .expander {
    width: 5px;
    height: 5px;
    border: 1px solid #aaa;
    background: linear-gradient(#333, #333) center / 3px 1px no-repeat, #fff;
  }

  .expander.plus {
    margin-left: -3px;
    background: linear-gradient(#333, #333) center / 3px 1px no-repeat,
      linear-gradient(#333, #333) center / 1px 3px no-repeat, #fff;
  }

  .stub {
    width: 4px;
    height: 1px;
    background: #bbb;
  }

  .root .stub {
    width: 3px;
  }

  .stub.long {
    width: 8px;
  }

  .swatch {
    width: 11px;
    height: 8px;
    margin: 0 4px 0 2px;
    border: 1px solid #000;
  }

  .swatch.large {
    width: 22px;
    height: 13px;
    margin: 0 2px 0 0;
  }

  .swatch.black {
    background: #000;
  }

  .dock-tabs {
    display: flex;
    align-items: center;
    gap: 4px;
    height: 20px;
    padding-left: 2px;
    flex-shrink: 0;
    color: #ddd;
  }

  .dock-tabs button {
    display: flex;
    align-items: center;
    height: 15px;
    padding: 0 1px;
    gap: 1px;
    white-space: nowrap;
  }

  .dock-tabs button.active {
    padding-right: 3px;
    border: 1px solid #a8c0d0;
    background: linear-gradient(#fff, #dfe6ec);
    color: #111;
  }

  main {
    display: flex;
    flex-direction: column;
    flex: 1;
    min-width: 0;
    padding: 1px 1px 0 3px;
  }

  .canvas {
    position: relative;
    flex: 1;
    min-height: 0;
    overflow: hidden;
    background: #fff;
  }

  .sheet {
    display: block;
    width: 100%;
    height: 100%;
    font: 8px 'Liberation Serif', serif;
    fill: #222;
  }

  .anchor {
    overflow: visible;
  }

  .grid {
    stroke: #c4c4c4;
    shape-rendering: crispEdges;
  }

  .tick {
    stroke: #444;
    shape-rendering: crispEdges;
  }

  .text-object {
    position: absolute;
    left: 77px;
    top: 309px;
    width: 240px;
    height: 147px;
    box-sizing: border-box;
    padding: 2px 0 2px 1px;
    border: 5px solid #808080;
    background: #fff;
    box-shadow: inset 0 0 0 1px #333;
  }

  .lines {
    display: flex;
    flex-direction: column;
    height: 100%;
    font: 14px/16px 'Noto Sans CJK SC', sans-serif;
    color: #222;
  }

  .lines p {
    flex: 1 1 0;
    min-height: 0;
    background: #9b9b9b;
    white-space: nowrap;
  }

  .lines p:last-child {
    align-self: flex-start;
  }

  .latin {
    font-family: 'Liberation Mono', monospace;
    font-size: 12px;
    line-height: 1px;
  }

  .handle {
    position: absolute;
    left: -1px;
    width: 4px;
    height: 4px;
    border: 1px solid #333;
    border-radius: 2px;
    background: #fff;
  }

  .handle.top {
    top: -5px;
  }

  .handle.bottom {
    bottom: -5px;
  }

  .anchor-mark {
    position: absolute;
    left: 245px;
    top: 379px;
    width: 4px;
    height: 4px;
    border: 1px solid #e020e0;
  }

  .doc-tabs {
    display: flex;
    align-items: stretch;
    height: 18px;
    flex-shrink: 0;
    border-bottom: 2px solid #ddd;
    background: #9b9d9c;
  }

  .doc-tabs button {
    display: flex;
    align-items: center;
    gap: 3px;
    padding: 0 3px 0 5px;
    border-right: 1px solid #777;
  }

  .doc-tabs b {
    margin-left: 2px;
    font-size: 11px;
  }

  .doc-tabs .active {
    background: #fff;
    color: #1414e0;
    border: 0;
  }

  .doc-tabs .active b {
    color: #000;
  }

  .pager {
    margin: 5px 4px 0 auto;
    width: 28px;
  }

  .pager svg {
    display: block;
  }

  .side {
    display: flex;
    flex-direction: column;
    width: 8px;
    flex-shrink: 0;
    padding-left: 2px;
    overflow: hidden;
  }

  .side .panel header,
  .side .panel-tools,
  .side .dock-tabs {
    padding-left: 0;
    overflow: hidden;
  }

  .side .frame {
    border-right: 0;
  }

  .blank {
    flex: 1;
  }

  .scroll {
    display: flex;
    align-items: center;
    justify-content: flex-end;
    height: 12px;
    background: #eee;
  }

  .scroll i {
    border: 2px solid transparent;
    border-right: 3px solid #222;
    border-left: 0;
  }

  .status {
    display: flex;
    align-items: center;
    height: 20px;
    flex-shrink: 0;
    padding-left: 4px;
    border-top: 1px solid #444;
    background: #9c9e9d;
    white-space: nowrap;
  }

  .status.position {
    align-items: flex-end;
    border: 0;
    height: 21px;
    background: #fff;
  }

  .position .bar,
  .position .title,
  .position label,
  .position .pair {
    margin-bottom: 1px;
  }

  .status .title {
    font-size: 8px;
    margin-right: 3px;
  }

  .status a {
    color: #1414e0;
    text-decoration: none;
  }

  .radio,
  .check {
    display: flex;
    align-items: center;
    gap: 2px;
  }

  .radio {
    margin-right: 7px;
  }

  .radio input {
    appearance: none;
    width: 8px;
    height: 8px;
    border: 1px solid #ccc;
    border-radius: 50%;
    background: #eee;
  }

  .radio input:checked {
    background: radial-gradient(#1a4a90 0 2px, #eef4fa 3px);
  }

  .check input {
    appearance: none;
    width: 8px;
    height: 8px;
    border: 1px solid #b8b8b8;
    background: #eee;
  }

  .status .check {
    margin-right: 6px;
  }

  .bar {
    width: 1px;
    height: 9px;
    margin: 0 6px 0 1px;
    background: #333;
  }

  .position .bar {
    margin-right: 5px;
  }

  .pair {
    display: flex;
    align-items: center;
    gap: 4px;
    margin-right: 6px;
  }

  .pair .color {
    width: 12px;
    height: 10px;
    background: #000;
  }

  .status .combo {
    height: 13px;
    border-color: #8c9cb0;
    background: linear-gradient(#fff, #e4e4e4);
    padding-left: 1px;
  }

  .combo.style {
    width: 35px;
    margin-right: 5px;
  }

  .combo.align {
    width: 51px;
    margin-right: 6px;
  }

  .field {
    display: flex;
    align-items: center;
    margin-right: 4px;
  }

  .status .field input {
    height: 13px;
    padding-left: 1px;
    border: 1px solid #a8bcd4;
    background: #fff;
  }

  .dialog {
    position: absolute;
    left: 438px;
    top: 217px;
    width: 298px;
    height: 295px;
    display: flex;
    flex-direction: column;
    box-sizing: border-box;
    padding: 0 4px 5px;
    border: 1px solid #26364c;
    border-radius: 5px;
    background: linear-gradient(90deg, #b9cfec, #5e90d4 35%, #5387d0 65%, #a8c4e8) 0 0 / 100% 66px no-repeat, #4f86d2;
    box-shadow: 1px 2px 7px 2px rgba(0, 0, 0, 0.6);
  }

  .dialog header {
    display: flex;
    align-items: center;
    justify-content: space-between;
    height: 22px;
  }

  .dialog header button {
    display: flex;
    align-items: center;
    justify-content: center;
    align-self: flex-start;
    width: 29px;
    height: 14px;
    border: 1px solid #611;
    border-radius: 0 0 3px 3px;
    background: linear-gradient(#e0a090, #c84830 50%, #b83018);
  }

  .dialog header svg {
    width: 10px;
    height: 8px;
  }

  .client {
    flex: 1;
    display: flex;
    flex-direction: column;
    padding: 9px 6px 0;
    border: 1px solid #dfe8f4;
    background: #f0f0f0;
  }

  .name-box {
    display: flex;
    align-items: center;
    height: 14px;
    margin-top: 8px;
    padding-left: 1px;
    border: 1px solid #4a90c8;
    border-bottom-color: #b0cce0;
    background: #fff;
    box-sizing: border-box;
  }

  .highlight {
    background: #3399ff;
    color: #fff;
  }

  .name-box input {
    flex: 1;
    min-width: 0;
  }

  .list {
    display: flex;
    height: 180px;
    margin-top: 1px;
    border: 1px solid #828790;
    box-sizing: border-box;
    background: #fff;
  }

  .list ul {
    flex: 1;
  }

  .list li {
    height: 12px;
  }

  .list li button {
    display: flex;
    align-items: center;
    gap: 1px;
    width: 100%;
    height: 12px;
    padding-left: 1px;
    text-align: left;
  }

  .list .icon {
    width: 8px;
    height: 9px;
  }

  .list li[aria-selected='true'] {
    background: #3399ff;
    color: #fff;
  }

  .scrollbar {
    display: flex;
    flex-direction: column;
    align-items: center;
    width: 11px;
    padding: 6px 0;
    box-sizing: border-box;
    background: #f2f2f2;
  }

  .arrow {
    border: 2px solid transparent;
    border-top: 3px solid #333;
    border-bottom: 0;
  }

  .arrow.up {
    border-top: 0;
    border-bottom: 3px solid #333;
    margin-bottom: auto;
  }

  .thumb {
    width: 7px;
    height: 9px;
    margin-bottom: 6px;
    border: 1px solid #999;
    background: linear-gradient(90deg, #f4f4f4, #d0d0d0);
  }

  .actions {
    display: flex;
    align-items: center;
    gap: 6px;
    margin-top: 18px;
  }

  .actions .check {
    flex: 1;
  }

  .actions button {
    width: 44px;
    height: 16px;
    border: 1px solid #808080;
    border-radius: 2px;
    background: linear-gradient(#f4f4f4, #e6e6e6 50%, #d2d2d2);
  }

  .actions .primary {
    border-color: #3c9fd0;
    box-shadow: inset 0 0 0 1px #9adcf4;
  }

  .callout {
    position: absolute;
    left: 151px;
    top: 552px;
    width: 218px;
  }

  .callout svg {
    display: block;
    width: 100%;
  }

  .callout p {
    position: absolute;
    left: 24px;
    top: 10px;
    font: bold 21px/30px 'Noto Sans CJK SC', sans-serif;
    color: #800000;
    white-space: nowrap;
  }
</style>
